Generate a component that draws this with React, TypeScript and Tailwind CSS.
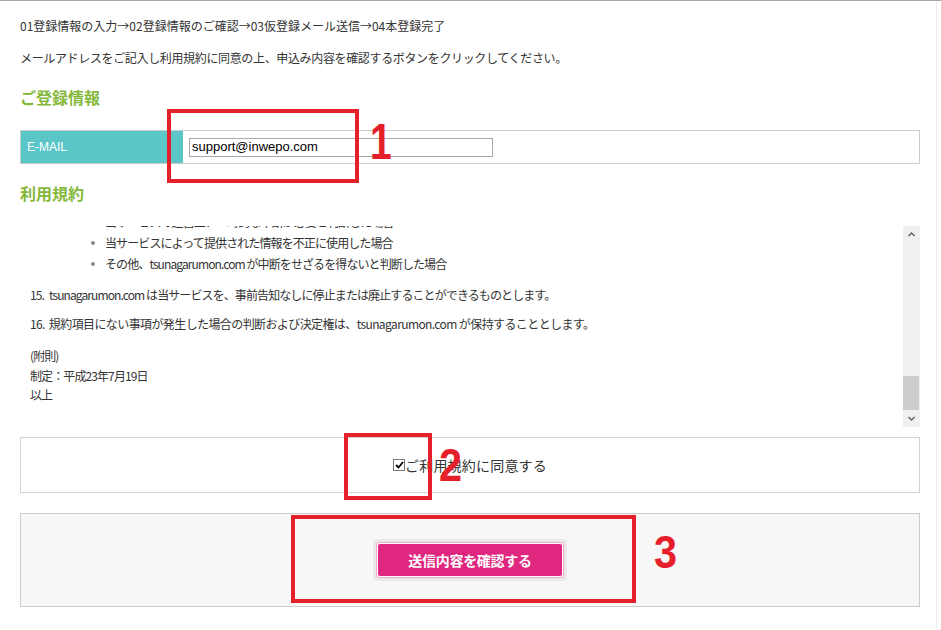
import React from 'react';

// ============================================================================
// PIECES
// ============================================================================

function ScrollBar() {
  return (
    <div className="flex w-[17px] shrink-0 flex-col bg-[#f0f0f0]">
      <div className="flex h-[17px] items-center justify-center">
        <svg width="7" height="5" viewBox="0 0 7 5">
          <path d="M0.5 4 L3.5 1 L6.5 4" fill="none" stroke="#606060" strokeWidth="1.4" />
        </svg>
      </div>
      <div className="flex flex-1 flex-col justify-end">
        <div className="mr-px h-[34px] bg-[#cdcdcd]" />
      </div>
      <div className="flex h-[17px] items-center justify-center">
        <svg width="7" height="5" viewBox="0 0 7 5">
          <path d="M0.5 1 L3.5 4 L6.5 1" fill="none" stroke="#606060" strokeWidth="1.4" />
        </svg>
      </div>
    </div>
  );
}

function Bullet({ children }: { children: React.ReactNode }) {
  return (
    <div className="flex items-center pl-[61px] leading-[21px]">
      <span className="mr-[10px] h-[4px] w-[4px] rounded-full bg-[#8a8a8a]" />
      <span>{children}</span>
    </div>
  );
}

function TermsBox() {
  return (
    <div className="mt-[23px] flex h-[201px]">
      <div className="flex-1 overflow-hidden pl-[10px] text-[12px] tracking-[-0.9px]">
        <div className="-mt-[15px]">
          <Bullet>当サービスの運営上、一時的な中断が必要と判断した場合</Bullet>
          <Bullet>当サービスによって提供された情報を不正に使用した場合</Bullet>
          <Bullet>その他、tsunagarumon.com が中断をせざるを得ないと判断した場合</Bullet>
          <p className="mt-[10px] leading-[21px]">
            <span className="mr-[5px]">15.</span>tsunagarumon.com は当サービスを、事前告知なしに停止または廃止することができるものとします。
          </p>
          <p className="mt-[8px] leading-[21px] tracking-[-0.6px]">
            <span className="mr-[4px]">16.</span>規約項目にない事項が発生した場合の判断および決定権は、tsunagarumon.com が保持することとします。
          </p>
          <div className="mt-[12px] leading-[19.5px]">
            <p>(附則)</p>
            <p>制定：平成23年7月19日</p>
            <p>以上</p>
          </div>
        </div>
      </div>
      <ScrollBar />
    </div>
  );
}

// ============================================================================
// APP
// ============================================================================

export default function App() {
  return (
    <div className="relative h-[630px] w-[941px] overflow-hidden border-t border-[#a8a8a8] bg-white font-['Noto_Sans_CJK_JP',sans-serif] text-[#333]">
      <div className="h-full w-[937px] border-r border-[#eeeeee] pl-5 pr-[16px] pt-[16px]">
        <p className="text-[12px] leading-[18px] tracking-[0px]">
          01登録情報の入力→02登録情報のご確認→03仮登録メール送信→04本登録完了
        </p>
        <p className="mt-[14px] text-[12px] leading-[18px] tracking-[-0.35px]">
          メールアドレスをご記入し利用規約に同意の上、申込み内容を確認するボタンをクリックしてください。
        </p>

        <h2 className="mt-[20px] text-[16px] font-bold leading-[20px] text-[#86b83c]">ご登録情報</h2>

        {/* E-mail row */}
        <div className="mt-[23px] flex h-[34px] border border-[#cccccc]">
          <div className="flex w-[162px] items-center bg-[#5bc6c7] pl-[6px] font-['Liberation_Sans',sans-serif] text-[12px] text-white">
            E-MAIL
          </div>
          <div className="flex flex-1 items-center pl-[6px]">
            <input
              readOnly
              value="support@inwepo.com"
              className="h-[19px] w-[304px] border border-[#a9a9a9] bg-white px-[2px] font-['Liberation_Sans',sans-serif] text-[13px] text-black outline-none"
            />
          </div>
        </div>

        <h2 className="mt-[19px] text-[16px] font-bold leading-[20px] text-[#86b83c]">利用規約</h2>

        <TermsBox />

        {/* Agree */}
        <div className="mt-[10px] flex h-[56px] items-center justify-center border border-[#d6d1c8]">
          <span className="flex h-[12px] w-[12px] items-center justify-center border border-[#777] bg-white">
            <svg width="9" height="8" viewBox="0 0 9 8">
              <path d="M1 4 L3.5 6.5 L8 1" fill="none" stroke="#000" strokeWidth="1.8" />
            </svg>
          </span>
          <span className="text-[14px] leading-[20px] tracking-[0.2px]">ご利用規約に同意する</span>
        </div>

        {/* Submit */}
        <div className="mt-[20px] flex h-[94px] items-center justify-center border border-[#cccccc] bg-[#f7f7f7]">
          <div className="rounded-[4px] bg-[#e9e9e9] p-[3px]">
            <button className="flex h-[36px] w-[188px] items-center justify-center rounded-[3px] border border-[#f2a6cb] bg-white p-px">
              <span className="flex h-full w-full items-center justify-center rounded-[2px] bg-[#e0277f] text-[14px] font-bold tracking-[-0.3px] text-white">
                送信内容を確認する
              </span>
            </button>
          </div>
        </div>
      </div>

      {/* Annotations */}
      <div className="absolute left-[167px] top-[108px] h-[74px] w-[192px] border-4 border-[#e5202a]" />
      <span className="absolute left-[370px] top-[116px] origin-left scale-x-[0.78] font-['Liberation_Sans',sans-serif] text-[50px] font-bold leading-none text-[#e5202a]">
        1
      </span>
      <div className="absolute left-[344px] top-[432px] h-[67px] w-[88px] border-4 border-[#e5202a]" />
      <span className="absolute left-[439px] top-[441px] origin-left scale-x-[0.9] font-['Liberation_Sans',sans-serif] text-[46px] font-bold leading-none text-[#e5202a]">
        2
      </span>
      <div className="absolute left-[291px] top-[514px] h-[88px] w-[345px] border-4 border-[#e5202a]" />
      <span className="absolute left-[654px] top-[528px] origin-left scale-x-[0.9] font-['Liberation_Sans',sans-serif] text-[46px] font-bold leading-none text-[#e5202a]">
        3
      </span>
    </div>
  );
}
